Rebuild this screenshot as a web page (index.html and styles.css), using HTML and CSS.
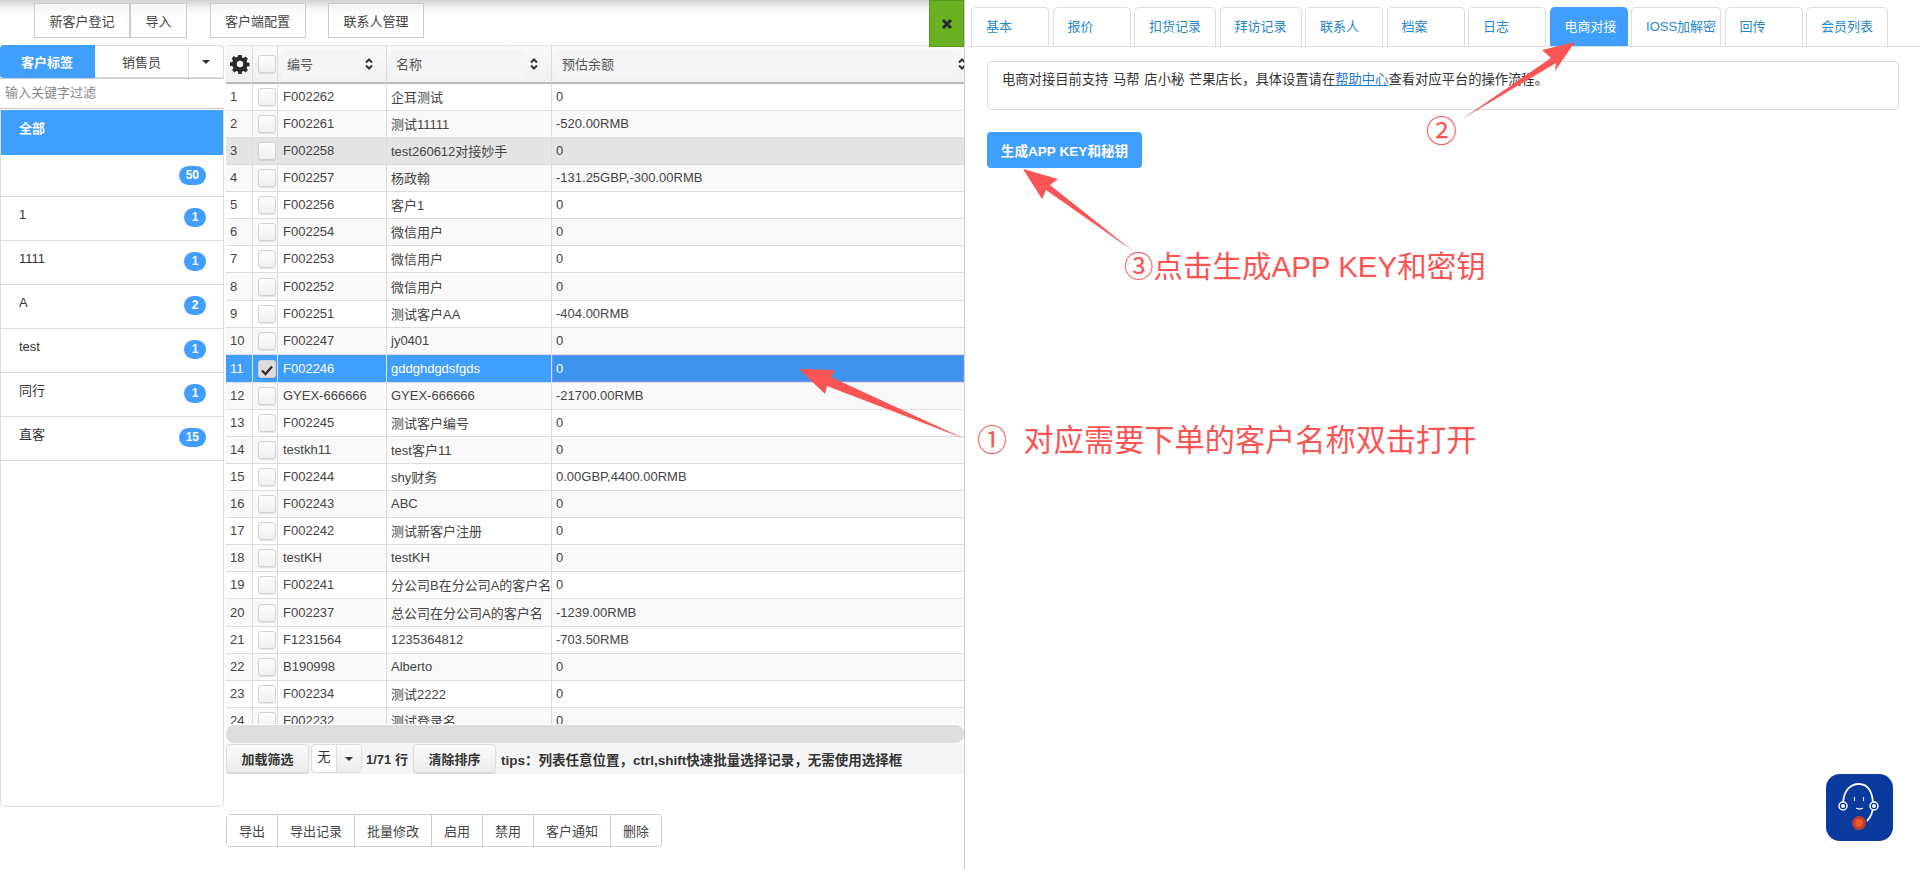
FILE: index.html
```html
<!DOCTYPE html>
<html lang="zh-CN">
<head>
    <meta charset="UTF-8">
    <title>客户管理</title>
    <link rel="stylesheet" href="styles.css">
</head>
<body>
<div class="app">
    <div class="left">
        <div class="toolbar">
            <div class="btn-group"><button class="tool-btn">新客户登记</button><button class="tool-btn">导入</button></div>
            <button class="tool-btn">客户端配置</button>
            <button class="tool-btn">联系人管理</button>
            <div class="close-btn">
                <svg width="12" height="12" viewBox="0 0 12 12"><path d="M2 2l8 8M10 2l-8 8" stroke="#2b2b2b" stroke-width="3"/></svg>
            </div>
        </div>
        <div class="main">
            <div class="sidebar">
                <div class="side-tabs">
                    <div class="side-tab active">客户标签</div>
                    <div class="side-tab sales">销售员</div>
                    <div class="side-tab more"><span class="caret"></span></div>
                </div>
                <input class="filter" type="text" placeholder="输入关键字过滤">
                <ul class="tags">
                    <li class="all">全部</li>
                    <li class="first"><span></span><span class="badge">50</span></li>
                    <li><span>1</span><span class="badge">1</span></li>
                    <li><span>1111</span><span class="badge">1</span></li>
                    <li><span>A</span><span class="badge">2</span></li>
                    <li><span>test</span><span class="badge">1</span></li>
                    <li><span>同行</span><span class="badge">1</span></li>
                    <li><span>直客</span><span class="badge">15</span></li>
                </ul>
            </div>
            <div class="grid-wrap">
                <div class="grid">
                    <table>
                        <thead>
                        <tr>
                            <th class="col-no">
                                <svg class="gear" width="20" height="20" viewBox="0 0 20 20"><path fill="#2b2b2b" fill-rule="evenodd" d="M8.3 1h3.4l.4 2.4 1.5.6 2-1.4 2.3 2.3-1.4 2 .6 1.5 2.4.4v3.4l-2.4.4-.6 1.5 1.4 2-2.3 2.3-2-1.4-1.5.6-.4 2.4H8.3l-.4-2.4-1.5-.6-2 1.4-2.3-2.3 1.4-2-.6-1.500L0 11.700V8.300l2.400-.4.6-1.500-1.400-2 2.300-2.300 2 1.400 1.500-.6zM10 6.800a3.200 3.200 0 1 0 0 6.400 3.200 3.200 0 0 0 0-6.400z"/></svg>
                            </th>
                            <th class="col-check"><span class="check"></span></th>
                            <th class="col-code"><div class="head-cell"><span class="head-label">编号</span><svg class="sort" width="10" height="14" viewBox="0 0 10 14"><path d="M2 5.500L5 2.500l3 3M2 8.500l3 3 3-3" fill="none" stroke="#333" stroke-width="2"/></svg></div></th>
                            <th class="col-name"><div class="head-cell"><span class="head-label">名称</span><svg class="sort" width="10" height="14" viewBox="0 0 10 14"><path d="M2 5.500L5 2.500l3 3M2 8.500l3 3 3-3" fill="none" stroke="#333" stroke-width="2"/></svg></div></th>
                            <th><div class="head-cell wide"><span class="head-label">预估余额</span><svg class="sort" width="10" height="14" viewBox="0 0 10 14"><path d="M2 5.500L5 2.500l3 3M2 8.500l3 3 3-3" fill="none" stroke="#333" stroke-width="2"/></svg></div></th>
                        </tr>
                        </thead>
                        <tbody>
                        <tr><td>1</td><td><span class="check"></span></td><td>F002262</td><td>企耳测试</td><td>0</td></tr>
                        <tr><td>2</td><td><span class="check"></span></td><td>F002261</td><td>测试11111</td><td>-520.00RMB</td></tr>
                        <tr class="hover"><td>3</td><td><span class="check"></span></td><td>F002258</td><td>test260612对接妙手</td><td>0</td></tr>
                        <tr><td>4</td><td><span class="check"></span></td><td>F002257</td><td>杨政翰</td><td>-131.25GBP,-300.00RMB</td></tr>
                        <tr><td>5</td><td><span class="check"></span></td><td>F002256</td><td>客户1</td><td>0</td></tr>
                        <tr><td>6</td><td><span class="check"></span></td><td>F002254</td><td>微信用户</td><td>0</td></tr>
                        <tr><td>7</td><td><span class="check"></span></td><td>F002253</td><td>微信用户</td><td>0</td></tr>
                        <tr class="tall"><td>8</td><td><span class="check"></span></td><td>F002252</td><td>微信用户</td><td>0</td></tr>
                        <tr><td>9</td><td><span class="check"></span></td><td>F002251</td><td>测试客户AA</td><td>-404.00RMB</td></tr>
                        <tr><td>10</td><td><span class="check"></span></td><td>F002247</td><td>jy0401</td><td>0</td></tr>
                        <tr class="selected tall"><td>11</td><td><span class="check on"><svg width="14" height="14" viewBox="0 0 14 14"><path d="M2 7.500l3.500 3.500L12 3.500" fill="none" stroke="#333" stroke-width="2.400"/></svg></span></td><td>F002246</td><td>gddghdgdsfgds</td><td class="focus">0</td></tr>
                        <tr><td>12</td><td><span class="check"></span></td><td>GYEX-666666</td><td>GYEX-666666</td><td>-21700.00RMB</td></tr>
                        <tr><td>13</td><td><span class="check"></span></td><td>F002245</td><td>测试客户编号</td><td>0</td></tr>
                        <tr><td>14</td><td><span class="check"></span></td><td>testkh11</td><td>test客户11</td><td>0</td></tr>
                        <tr><td>15</td><td><span class="check"></span></td><td>F002244</td><td>shy财务</td><td>0.00GBP,4400.00RMB</td></tr>
                        <tr><td>16</td><td><span class="check"></span></td><td>F002243</td><td>ABC</td><td>0</td></tr>
                        <tr><td>17</td><td><span class="check"></span></td><td>F002242</td><td>测试新客户注册</td><td>0</td></tr>
                        <tr><td>18</td><td><span class="check"></span></td><td>testKH</td><td>testKH</td><td>0</td></tr>
                        <tr><td>19</td><td><span class="check"></span></td><td>F002241</td><td>分公司B在分公司A的客户名</td><td>0</td></tr>
                        <tr class="tall"><td>20</td><td><span class="check"></span></td><td>F002237</td><td>总公司在分公司A的客户名</td><td>-1239.00RMB</td></tr>
                        <tr><td>21</td><td><span class="check"></span></td><td>F1231564</td><td>1235364812</td><td>-703.50RMB</td></tr>
                        <tr><td>22</td><td><span class="check"></span></td><td>B190998</td><td>Alberto</td><td>0</td></tr>
                        <tr><td>23</td><td><span class="check"></span></td><td>F002234</td><td>测试2222</td><td>0</td></tr>
                        <tr><td>24</td><td><span class="check"></span></td><td>F002232</td><td>测试登录名</td><td>0</td></tr>
                        </tbody>
                    </table>
                </div>
                <div class="scrollbar"></div>
                <div class="grid-foot">
                    <button class="foot-btn">加载筛选</button>
                    <div class="select"><span class="select-val">无</span><span class="select-arrow"><span class="caret"></span></span></div>
                    <span class="count">1/71 行</span>
                    <button class="foot-btn">清除排序</button>
                    <span class="tips">tips：列表任意位置，ctrl,shift快速批量选择记录，无需使用选择框</span>
                </div>
                <div class="actions">
                    <button>导出</button><button>导出记录</button><button>批量修改</button><button>启用</button><button>禁用</button><button>客户通知</button><button>删除</button>
                </div>
            </div>
        </div>
    </div>
    <div class="right">
        <div class="tabs">
            <div class="tab">基本</div>
            <div class="tab">报价</div>
            <div class="tab">扣货记录</div>
            <div class="tab">拜访记录</div>
            <div class="tab">联系人</div>
            <div class="tab">档案</div>
            <div class="tab">日志</div>
            <div class="tab active">电商对接</div>
            <div class="tab ioss">IOSS加解密</div>
            <div class="tab">回传</div>
            <div class="tab">会员列表</div>
        </div>
        <div class="content">
            <div class="notice">电商对接目前支持 马帮 店小秘 芒果店长，具体设置请在<a href="#">帮助中心</a>查看对应平台的操作流程。</div>
            <button class="gen-btn">生成APP KEY和秘钥</button>
        </div>
    </div>
</div>

<svg class="arrows" width="1920" height="869" viewBox="0 0 1920 869">
    <path fill="#fb5454" d="M965 439L827 386L825 394L799 369L835 370L831 377Z"/>
    <path fill="#fb5454" d="M1462 119L1551 58L1542 50L1575 42L1555 71L1556 63Z"/>
    <path fill="#fb5454" d="M1133 251L1046 190L1042 199L1023 169L1058 179L1050 185Z"/>
</svg>
<div class="note note-1">① 对应需要下单的客户名称双击打开</div>
<div class="note note-2">②</div>
<div class="note note-3">③点击生成APP KEY和密钥</div>

<div class="help">
    <svg width="67" height="67" viewBox="0 0 67 67">
        <rect width="67" height="67" rx="14" fill="#0b3a9e"/>
        <path d="M17 31C17 17 24 10 33 10C42 10 47 18 47 31C47 38 45 43 41 47" fill="none" stroke="#fff" stroke-width="1.800"/>
        <circle cx="17" cy="32" r="4" fill="#0b3a9e" stroke="#fff" stroke-width="1.500"/>
        <circle cx="17" cy="32" r="2" fill="#fff"/>
        <circle cx="48" cy="32" r="4" fill="#0b3a9e" stroke="#fff" stroke-width="1.500"/>
        <circle cx="48" cy="32" r="2" fill="#fff"/>
        <path d="M28.500 23v4M37.500 23v4" stroke="#dfe6f7" stroke-width="1.200"/>
        <path d="M30 34q3.500 2 7 0" fill="none" stroke="#fff" stroke-width="1.400"/>
        <circle cx="33" cy="49" r="7" fill="#b8402f"/>
        <circle cx="33" cy="49" r="4" fill="#f4562a"/>
    </svg>
</div>
</body>
</html>
```
FILE: styles.css
```css
* {
    box-sizing: border-box;
}
html, body {
    margin: 0;
    height: 869px;
    overflow: hidden;
    background-color: #fff;
}
body {
    font-family: "Liberation Sans", "Noto Sans CJK SC", sans-serif;
    font-size: 13px;
    color: #333;
    position: relative;
}
button {
    font-family: inherit;
    font-size: 13px;
    color: #444;
    cursor: pointer;
    white-space: nowrap;
}
ul {
    list-style-type: none;
    margin: 0;
    padding: 0;
}
.app {
    display: flex;
    height: 869px;
}
.left {
    width: 965px;
    flex: none;
    border-right: 1px solid #ccc;
}
.right {
    flex: 1;
    padding-top: 7px;
}

/* top bar */
.toolbar {
    height: 45px;
    display: flex;
    align-items: flex-start;
    gap: 22.5px;
    padding: 3px 0 0 34px;
    background: linear-gradient(#d0d0d0, #f2f2f2 8px, #fff 15px);
    position: relative;
}
.btn-group {
    display: flex;
}
.tool-btn {
    height: 35px;
    padding: 0 14.5px;
    background-color: #fff;
    background-image: linear-gradient(#f4f4f4, #fff 40%);
    border: 1px solid #ccc;
}
.close-btn {
    position: absolute;
    right: 0;
    top: 0;
    width: 35px;
    height: 47px;
    background-color: #6ab023;
    border: 1px solid #5c9a1e;
    display: flex;
    align-items: center;
    justify-content: center;
}

.main {
    display: flex;
    gap: 2px;
    align-items: flex-start;
}

/* tag sidebar */
.sidebar {
    width: 224px;
    height: 762px;
    border: 1px solid #ddd;
    border-radius: 5px;
}
.side-tabs {
    display: flex;
    height: 34px;
    margin: -1px -1px 0;
    border-bottom: 1px solid #ccc;
}
.side-tab {
    display: flex;
    align-items: center;
    justify-content: center;
    color: #444;
    border: 1px solid #ddd;
    border-left: none;
}
.side-tab.active {
    width: 95px;
    background-color: #409eff;
    border-color: #409eff;
    border-radius: 4px 0 0 4px;
    color: #fff;
    font-weight: bold;
}
.side-tab.sales {
    width: 94px;
}
.side-tab.more {
    flex: 1;
    border-radius: 0 4px 4px 0;
}
.caret {
    display: block;
    width: 0;
    height: 0;
    border-left: 4px solid transparent;
    border-right: 4px solid transparent;
    border-top: 4px solid #333;
}
.filter {
    display: block;
    width: 224px;
    height: 30px;
    margin-left: -1px;
    padding: 0 5px 2px;
    border: none;
    border-bottom: 1px solid #ccc;
    outline: none;
    font-family: inherit;
    font-size: 13px;
}
.filter::placeholder {
    color: #888;
}
.tags li {
    height: 44px;
    display: flex;
    justify-content: space-between;
    align-items: flex-start;
    padding: 10px 17px 0 18px;
    border-bottom: 1px solid #ddd;
    line-height: 15px;
}
.tags li.all {
    height: 45px;
    margin-top: 1px;
    background-color: #409eff;
    border-bottom: none;
    color: #fff;
    font-weight: bold;
    padding-top: 11px;
}
.tags li.first {
    height: 42px;
}
.badge {
    min-width: 22px;
    height: 19px;
    margin-top: 1px;
    padding: 0 7px;
    border-radius: 10px;
    background-color: #409eff;
    color: #fff;
    font-size: 12px;
    font-weight: bold;
    line-height: 19px;
    text-align: center;
}

/* customer grid */
.grid-wrap {
    width: 738px;
}
.grid {
    height: 679px;
    overflow: hidden;
}
table {
    width: 738px;
    table-layout: fixed;
    border-collapse: separate;
    border-spacing: 0;
}
th {
    height: 39px;
    padding: 0;
    font-weight: normal;
    text-align: left;
    background: linear-gradient(#fafafa, #f0f0f0);
    border-right: 1px solid #ddd;
    border-bottom: 2px solid #bbb;
    border-top: 1px solid #e4e4e4;
}
th:last-child, td:last-child {
    border-right: none;
}
.col-no { width: 27px; }
.col-check { width: 25px; }
.col-code { width: 109px; }
.col-name { width: 165px; }
.gear {
    display: block;
    margin-left: 4px;
}
.head-cell {
    display: flex;
    align-items: center;
    padding: 0 12px 0 4px;
    height: 36px;
    overflow: hidden;
}
.head-cell.wide {
    padding: 0 0 0 5px;
}
.head-label {
    flex: 1;
    height: 29px;
    line-height: 29px;
    padding-left: 5px;
    background-color: #f5f5f5;
    color: #555;
}
.wide .head-label {
    flex: none;
    width: 396px;
}
.sort {
    flex: none;
    margin-left: 4px;
}
td {
    height: 27px;
    padding: 0 4px 1px;
    border-right: 1px solid #ddd;
    border-bottom: 1px solid #ddd;
    white-space: nowrap;
    overflow: hidden;
    color: #444;
}
td:nth-child(3) {
    padding-left: 5px;
}
tr.tall td {
    height: 28px;
}
tbody tr:nth-child(even) td {
    background-color: #f9f9f9;
}
tbody tr.hover td {
    background-color: #e4e4e4;
}
tbody tr.selected td {
    background-color: #409eff;
    color: #fff;
    border-right-color: #dbe9fb;
}
tbody tr.selected td.focus {
    background-color: #3d92eb;
    box-shadow: inset 0 0 0 1px #7b8fe8;
}
.check {
    display: block;
    width: 18px;
    height: 18px;
    margin-left: 5px;
    background: linear-gradient(#fdfdfd, #f0f0f0);
    border: 1px solid #d2d2d2;
    border-radius: 3px;
    box-shadow: 0 1px 1px rgba(0, 0, 0, 0.1);
}
.check svg {
    display: block;
    margin: 2px 0 0 1px;
}
.check.on {
    background: #ddd;
}
td:nth-child(2) {
    padding: 0;
}
.scrollbar {
    height: 18px;
    margin-top: 1px;
    background-color: #ddd;
    border-radius: 8px;
    margin-bottom: -1px;
}
.grid-foot {
    height: 31px;
    display: flex;
    align-items: center;
    background-color: #f5f5f5;
    font-weight: bold;
    white-space: nowrap;
    margin-top: 1px;
}
.foot-btn {
    width: 83px;
    height: 29px;
    padding: 0;
    background: linear-gradient(#fafafa, #ececec);
    border: 1px solid #ddd;
    border-radius: 4px;
    box-shadow: 0 1px 1px rgba(0, 0, 0, 0.15);
    font-weight: bold;
    color: #333;
}
.select {
    display: flex;
    width: 51px;
    height: 29px;
    margin-left: 2px;
    background-color: #fff;
    border: 1px solid #ddd;
    border-radius: 4px;
    font-weight: normal;
}
.select-val {
    width: 24px;
    text-align: center;
    line-height: 24px;
}
.select-arrow {
    flex: 1;
    display: flex;
    align-items: center;
    justify-content: center;
    background: linear-gradient(#fafafa, #ececec);
    border-left: 1px solid #ddd;
    border-radius: 0 4px 4px 0;
}
.count {
    margin: 0 3px 0 4px;
    width: 44px;
}
.tips {
    margin-left: 5px;
    font-size: 13.500px;
}
.actions {
    display: flex;
    width: fit-content;
    margin-top: 40px;
    height: 33px;
    border: 1px solid #ccc;
    border-radius: 4px;
}
.actions button {
    flex: none;
    padding: 0 12px;
    background-color: #fff;
    border: none;
    border-right: 1px solid #ccc;
}
.actions button:last-child {
    border-right: none;
    border-radius: 0 4px 4px 0;
}

/* right panel */
.tabs {
    display: flex;
    gap: 3.5px;
    height: 40px;
    margin-left: 3px;
    padding-left: 3px;
    border-bottom: 1px solid #ddd;
}
.tab {
    min-width: 78px;
    height: 39px;
    padding: 0 14px;
    line-height: 38px;
    color: #1f86cf;
    border: 1px solid #ddd;
    border-bottom: none;
    border-radius: 5px 5px 0 0;
    white-space: nowrap;
}
.tab.active {
    width: 78px;
    padding-right: 0;
    background-color: #409eff;
    border-color: #409eff;
    color: #fff;
}
.tab.ioss {
    width: 90px;
    padding-right: 0;
}
.content {
    padding: 14px 21px 0 22px;
}
.notice {
    height: 49px;
    padding: 9px 14px;
    border: 1px solid #ddd;
    border-radius: 4px;
    font-size: 13.300px;
    line-height: 18px;
    word-spacing: 1px;
}
.notice a {
    color: #1f78d1;
}
.gen-btn {
    display: block;
    width: 155px;
    height: 36px;
    margin-top: 22px;
    padding: 0;
    background-color: #409eff;
    border: none;
    border-radius: 4px;
    color: #fff;
    font-size: 13.600px;
    font-weight: bold;
}

/* annotations drawn over the screenshot */
.arrows {
    position: absolute;
    left: 0;
    top: 0;
    pointer-events: none;
}
.note {
    position: absolute;
    color: #fb5454;
    font-size: 30px;
    line-height: 36px;
    white-space: nowrap;
}
.note-1 {
    left: 977px;
    top: 423px;
    font-size: 30.200px;
    word-spacing: 8px;
}
.note-2 {
    left: 1426px;
    top: 114px;
    font-size: 31px;
}
.note-3 {
    left: 1124px;
    top: 249px;
    font-size: 29.500px;
}
.help {
    position: absolute;
    left: 1826px;
    top: 774px;
    width: 67px;
    height: 67px;
}
.help svg {
    display: block;
}
```
